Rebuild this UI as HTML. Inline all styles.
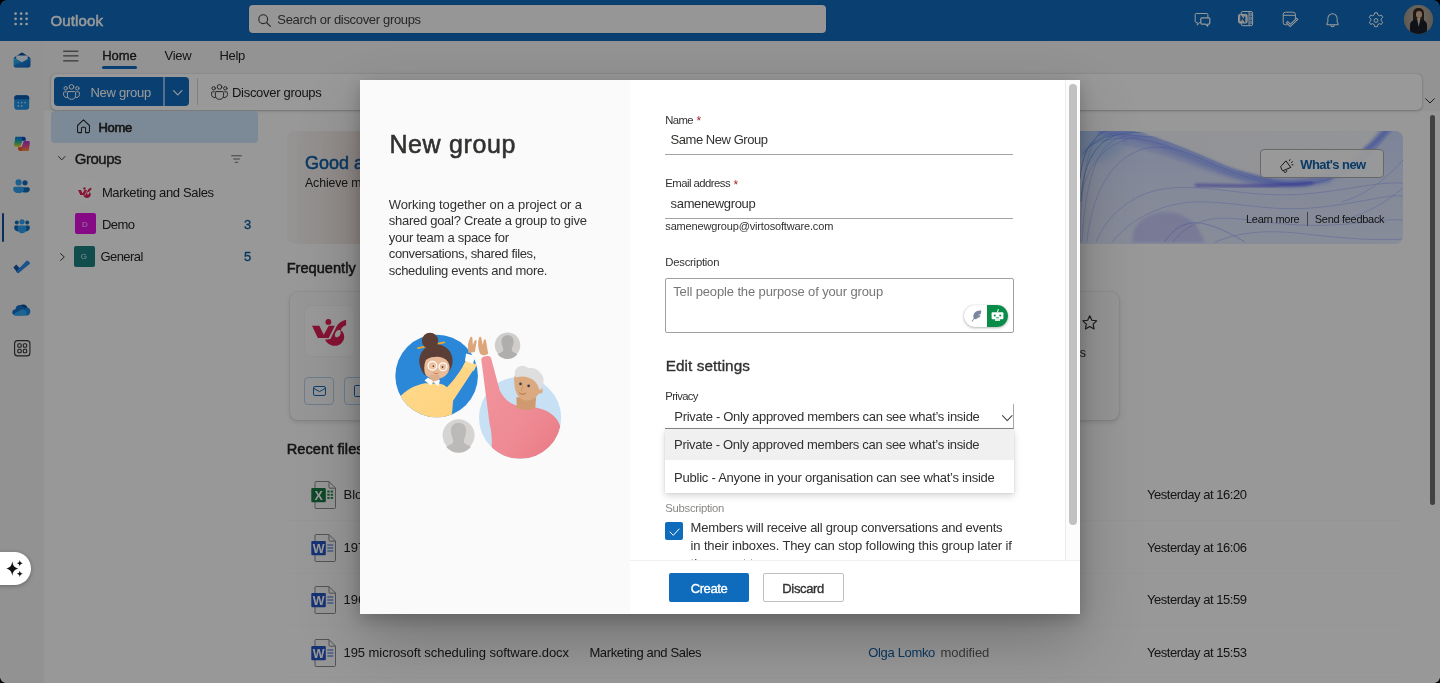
<!DOCTYPE html><html><head><meta charset="utf-8"><title>Outlook</title>
<style>
*{box-sizing:border-box;margin:0;padding:0}
html,body{width:1440px;height:683px;overflow:hidden;background:#f5f5f5;font-family:"Liberation Sans",sans-serif;color:#242424}
div,span,svg{position:absolute}
.t{white-space:nowrap;line-height:1;font-size:13px}
.b{font-weight:bold}
.sb{-webkit-text-stroke:.35px currentColor}
#top{left:0;top:0;width:1440px;height:41px;background:#0f6cbd}
#rail{left:0;top:41px;width:44px;height:642px;background:#f4f4f4}
#page{left:44px;top:41px;width:1396px;height:642px;background:#fdfdfd}
#overlay{left:0;top:0;width:1440px;height:683px;background:rgba(0,0,0,.4)}
svg{overflow:visible}
#wrap{left:0;top:0;width:1440px;height:683px;will-change:transform}
</style></head><body>
<div id="wrap">
<!-- ======= TOP BAR ======= -->
<div id="top">
  <svg style="left:14px;top:12.200px" width="15" height="15" viewBox="0 0 15 15" fill="#fff">
    <circle cx="1.600" cy="1.600" r="1.350"></circle><circle cx="7.100" cy="1.600" r="1.350"></circle><circle cx="12.600" cy="1.600" r="1.350"></circle>
    <circle cx="1.600" cy="6.800" r="1.350"></circle><circle cx="7.100" cy="6.800" r="1.350"></circle><circle cx="12.600" cy="6.800" r="1.350"></circle>
    <circle cx="1.600" cy="12" r="1.350"></circle><circle cx="7.100" cy="12" r="1.350"></circle><circle cx="12.600" cy="12" r="1.350"></circle>
  </svg>
  <span class="t" style="left: 50.6px; font-size: 15px; color: rgb(255, 255, 255); -webkit-text-stroke: 0.5px rgb(255, 255, 255); top: 13px; letter-spacing: 0.1px;">Outlook</span>
  <div style="left:249px;top:5px;width:577px;height:28px;background:#fbfbfb;border-radius:4px;box-shadow:0 0 0 .5px rgba(0,0,0,.15)"></div>
  <svg style="left:258px;top:13.5px" width="13" height="13" viewBox="0 0 13 13" fill="none" stroke="#424242" stroke-width="1.1" stroke-linecap="round"><circle cx="5.2" cy="5.2" r="4.4"></circle><path d="M8.5 8.5L12.4 12.4"></path></svg>
  <span class="t" style="left: 277.3px; font-size: 13px; color: rgb(66, 66, 66); top: 13px; letter-spacing: -0.33px;">Search or discover groups</span>
  <!-- chat -->
  <svg style="left:1195px;top:12.500px" width="16" height="14" viewBox="0 0 16 14" fill="none" stroke="#fff" stroke-width="1" stroke-linejoin="round"><path d="M1.200.5h10.700a1 1 0 0 1 1 1v6.900a1 1 0 0 1-1 1H4.600L2.300 12.200V9.400H1.200a1 1 0 0 1-1-1V1.500a1 1 0 0 1 1-1z"></path><path d="M6.800 4.800h7a1 1 0 0 1 1 1v4.300a1 1 0 0 1-1 1h-1.100v2.100l-2.300-2.100H6.800a1 1 0 0 1-1-1V5.800a1 1 0 0 1 1-1z" fill="#0f6cbd" stroke-width="1.200"></path></svg>
  <!-- onenote -->
  <svg style="left:1238px;top:11px" width="16" height="15" viewBox="0 0 16 15" fill="none" stroke="#fff" stroke-width="1" stroke-linejoin="round"><rect x="3.200" y=".5" width="11.400" height="14.200" rx="1.600"></rect><path d="M11 .8v13.700"></path><rect x="11.900" y="2.300" width="1.800" height="2.400" rx=".4" stroke-width=".8"></rect><rect x="11.900" y="6.300" width="1.800" height="2.400" rx=".4" stroke-width=".8"></rect><rect x="11.900" y="10.300" width="1.800" height="2.400" rx=".4" stroke-width=".8"></rect><rect x=".5" y="3.400" width="8.600" height="8.600" rx="1.200" fill="#ece8e4" stroke="#fff"></rect><path d="M3 9.900V5.500l3.600 4.400V5.500" stroke="#0f6cbd" stroke-width="1.500" stroke-linejoin="miter"></path></svg>
  <!-- calendar check -->
  <svg style="left:1282px;top:12px" width="16" height="15" viewBox="0 0 16 15" fill="none" stroke="#fff" stroke-width="1" stroke-linecap="round" stroke-linejoin="round"><path d="M5.200 12.800H3.400a2.200 2.200 0 0 1-2.200-2.200V2.400A2.200 2.200 0 0 1 3.400.2h7.800a2.200 2.200 0 0 1 2.200 2.200v4"></path><path d="M1.400 3.300h11.800"></path><path d="M5.600 10.700l2.600 2.700 6.400-6" stroke-width="2.700" stroke-linecap="square" stroke-linejoin="miter"></path><path d="M5.600 10.700l2.600 2.700 6.400-6" stroke="#0f6cbd" stroke-width=".9" stroke-linecap="square" stroke-linejoin="miter"></path></svg>
  <!-- bell -->
  <svg style="left:1325.600px;top:12.600px" width="13" height="15.400" viewBox="0 0 14 16" preserveAspectRatio="none" fill="none" stroke="#fff" stroke-width="1.050" stroke-linejoin="round" stroke-linecap="round"><path d="M7 .8a5 5 0 0 1 5 5v3.400l1.200 2.400a.4.400 0 0 1-.4.600H1.200a.4.400 0 0 1-.4-.6L2 9.200V5.800a5 5 0 0 1 5-5z"></path><path d="M5.200 12.400a1.800 1.800 0 0 0 3.600 0"></path></svg>
  <!-- gear -->
  <svg style="left:1367.500px;top:11.500px" width="16" height="17" viewBox="-8 -8.500 16 17" fill="none" stroke="#fff" stroke-width="1" stroke-linejoin="round"><path d="M-1.300 -7.700h2.600l.5 2.100 1.500.9 2.100-.7 1.300 2.300-1.600 1.500v1.700l1.600 1.500-1.300 2.300-2.100-.7-1.500.9-.5 2.100h-2.600l-.5-2.100-1.500-.9-2.100.7-1.300-2.300 1.600-1.500v-1.700l-1.600-1.500 1.300-2.300 2.100.7 1.500-.9z"></path><circle r="1.900"></circle></svg>
  <!-- avatar -->
  <div style="left:1404px;top:5px;width:29px;height:29px;border-radius:50%;overflow:hidden;background:#8d8a86">
    <div style="left:0;top:0;width:29px;height:29px;background:radial-gradient(ellipse at 50% 40%,#bdb5a8 0,#a39c90 60%,#8a8378 100%)"></div>
    <div style="left:9px;top:3px;width:11px;height:17px;border-radius:5px 5px 3px 3px;background:#3a2a22"></div>
    <div style="left:11.500px;top:5.500px;width:6px;height:7.500px;border-radius:3px;background:#d9b39b"></div>
    <div style="left:6px;top:15px;width:17px;height:16px;border-radius:5px 5px 0 0;background:#1c1f2a"></div>
    <div style="left:13px;top:13px;width:3.500px;height:9px;background:#d8c8b8;clip-path:polygon(0 0,100% 0,50% 100%)"></div>
  </div>
</div>
<!-- ======= LEFT RAIL ======= -->
<div id="rail"></div>
<!-- rail icons -->
<svg style="left:13px;top:52px" width="18" height="16" viewBox="0 0 18 16">
  <defs><linearGradient id="gm1" x1="0" y1="0" x2="1" y2="1"><stop offset="0" stop-color="#35b8f1"></stop><stop offset="1" stop-color="#0f6fd0"></stop></linearGradient></defs>
  <path d="M1.200 5.400L8.300.700a1.300 1.300 0 0 1 1.400 0L16.800 5.400V9H1.200z" fill="#0b4f9e"></path>
  <rect x="3.200" y="3.600" width="11.600" height="7" rx="1" fill="#e8f3fc"></rect>
  <path d="M.6 6.200a.5.500 0 0 1 .8-.4L9 10.200l7.600-4.400a.5.500 0 0 1 .8.400v7.400a1.800 1.800 0 0 1-1.800 1.800H2.400a1.800 1.800 0 0 1-1.800-1.800z" fill="url(#gm1)"></path>
  <path d="M.6 13.600L17.400 7v6.600a1.800 1.800 0 0 1-1.800 1.800H2.400a1.800 1.800 0 0 1-1.800-1.800z" fill="#1565c0" opacity=".55"></path>
</svg>
<svg style="left:14px;top:95px" width="15.500" height="15" viewBox="0 0 15.500 15">
  <rect x=".2" y=".2" width="15" height="14.600" rx="3" fill="#1e90e6"></rect>
  <path d="M.2 3.200a3 3 0 0 1 3-3h9a3 3 0 0 1 3 3v1H.2z" fill="#0c59a8"></path>
  <g fill="#a9dcfb"><circle cx="4.300" cy="7.600" r=".9"></circle><circle cx="7.700" cy="7.600" r=".9"></circle><circle cx="11.100" cy="7.600" r=".9"></circle><circle cx="4.300" cy="11" r=".9"></circle><circle cx="7.700" cy="11" r=".9"></circle></g>
</svg>
<svg style="left:6px;top:128px" width="32" height="32" viewBox="0 0 683 683">
  <defs>
   <linearGradient id="cp1" x1="0" y1="0" x2="0" y2="1"><stop offset="0" stop-color="#0b78e0"></stop><stop offset=".4" stop-color="#18a8c0"></stop><stop offset=".72" stop-color="#6cc85a"></stop><stop offset="1" stop-color="#ffd020"></stop></linearGradient>
   <linearGradient id="cp2" x1="0" y1="0" x2="0" y2="1"><stop offset="0" stop-color="#a838e0"></stop><stop offset=".5" stop-color="#ec4890"></stop><stop offset="1" stop-color="#ff9030"></stop></linearGradient>
  </defs>
  <path d="M478 492H298Q262 490 258 418L330 408L378 278H483Q518 280 508 330L488 465Q485 490 478 492Z" fill="url(#cp2)"></path>
  <path d="M342 488H292Q262 482 258 415L334 408Q354 450 342 488Z" fill="#ee5a2a"></path>
  <path d="M205 188H385Q420 190 425 262L352 272L305 402H200Q165 400 175 350L195 215Q198 190 205 188Z" fill="url(#cp1)"></path>
  <path d="M340 192H390Q420 198 425 265L350 272Q328 230 340 192Z" fill="#1c44c0"></path>
  <path d="M352 285L374 285L330 400L308 400Z" fill="#fff" opacity=".9"></path>
</svg>
<svg style="left:13px;top:178.500px" width="17" height="14.500" viewBox="0 0 17 14.500">
  <circle cx="12" cy="3.800" r="2.600" fill="#0f6cbd"></circle>
  <path d="M8.600 8.200h6.600a1.600 1.600 0 0 1 1.600 1.600v.6c0 2-1.800 3.200-4.600 3.200s-3.600-1.200-3.600-3.200z" fill="#0f6cbd"></path>
  <circle cx="5.600" cy="3.400" r="3.100" fill="#2ea0ee"></circle>
  <path d="M1.800 7.800h7.600a1.600 1.600 0 0 1 1.600 1.600v.8c0 2.400-2.200 3.900-5.400 3.900S.2 12.600.2 10.200v-.8a1.600 1.600 0 0 1 1.600-1.600z" fill="#2ea0ee"></path>
</svg>
<div style="left:2.200px;top:213px;width:1.700px;height:29px;background:#0f4f9c;border-radius:1px"></div>
<svg style="left:13.500px;top:219px" width="16" height="14.500" viewBox="0 0 16 14.500">
  <circle cx="2.800" cy="3.600" r="2" fill="#0f6cbd"></circle><circle cx="13.200" cy="3.600" r="2" fill="#0f6cbd"></circle>
  <path d="M.2 8a1.400 1.400 0 0 1 1.400-1.400h3v5.800C2.400 12.400.2 11.400.2 9z" fill="#0f6cbd"></path>
  <path d="M15.800 8a1.400 1.400 0 0 0-1.400-1.400h-3v5.800c2.200 0 4.400-1 4.400-3.400z" fill="#0f6cbd"></path>
  <circle cx="8" cy="2.800" r="2.600" fill="#2ea0ee"></circle>
  <path d="M3.800 8a1.600 1.600 0 0 1 1.600-1.600h5.200A1.600 1.600 0 0 1 12.200 8v2.200c0 2.400-1.800 4.100-4.200 4.100s-4.200-1.700-4.200-4.100z" fill="#2ea0ee"></path>
</svg>
<svg style="left:13px;top:260px" width="17.500" height="14.500" viewBox="0 0 17.500 14.500">
  <path d="M.4 7.400L3.200 4.600l5.400 5.400-2.800 2.800a1 1 0 0 1-1.400 0z" fill="#1553a8"></path>
  <path d="M5.800 12.800a1 1 0 0 1-1.400 0L3 11.400 13.600.8a1 1 0 0 1 1.400 0l1.700 1.700a1 1 0 0 1 0 1.400z" fill="#2a8ae6"></path>
</svg>
<svg style="left:12.400px;top:303px" width="18.500" height="13" viewBox="0 0 18.500 13">
  <path d="M7.200 3.200a5 5 0 0 1 8.400 1.400l-6 5.400z" fill="#0f4f9c"></path>
  <path d="M3.400 6.200A4.200 4.200 0 0 1 10.800 3.600l3.400 2-7.400 6.800H3.800A3.600 3.600 0 0 1 .2 9a3.400 3.400 0 0 1 3.200-2.800z" fill="#1570c8"></path>
  <path d="M14.600 4.400A3.800 3.800 0 0 1 18.300 8.400 4 4 0 0 1 14.600 12.400H6.400z" fill="#1a86e0"></path>
  <path d="M3.200 12.400A3.200 3.200 0 0 1 1 11.600L10.400 6l4.200 2.600c.5 2.400-.7 3.800-2.400 3.800z" fill="#30a8f2"></path>
</svg>
<svg style="left:13.700px;top:340px" width="16.500" height="16.500" viewBox="0 0 16.500 16.500" fill="none" stroke="#333" stroke-width="1.100">
  <rect x=".6" y=".6" width="15.300" height="15.300" rx="3"></rect>
  <rect x="3.800" y="3.800" width="3.400" height="3.400" rx="1"></rect><rect x="9.300" y="3.800" width="3.400" height="3.400" rx="1"></rect>
  <rect x="3.800" y="9.300" width="3.400" height="3.400" rx="1"></rect><rect x="9.300" y="9.300" width="3.400" height="3.400" rx="1"></rect>
</svg>
<!-- ======= PAGE ======= -->
<div id="page"></div>
<div style="left:44px;top:41px;width:1396px;height:70px;background:#f5f5f5"></div>
<!-- tabs -->
<svg style="left:63px;top:49.500px" width="16" height="12" viewBox="0 0 16 12" stroke="#333" stroke-width="1" stroke-linecap="round"><path d="M.6 1.200h14.400M.6 5.900h14.400M.6 10.900h14.400"></path></svg>
<span class="t sb" style="left: 102.2px; top: 49.4px; letter-spacing: -0.047px;">Home</span>
<div style="left:102px;top:66px;width:35px;height:2.600px;border-radius:2px;background:#0f6cbd"></div>
<span class="t" style="left: 164.6px; top: 49.4px; letter-spacing: -0.338px;">View</span>
<span class="t" style="left: 219.4px; top: 49.4px; letter-spacing: -0.313px;">Help</span>
<!-- ribbon -->
<div style="left:51px;top:74px;width:1371px;height:36px;background:#fff;border-radius:5px;box-shadow:0 1px 3px rgba(0,0,0,.22),0 0 1px rgba(0,0,0,.25)"></div>
<div style="left:54.400px;top:77px;width:108.600px;height:29px;background:#0f6cbd;border-radius:4px 0 0 4px"></div>
<div style="left:163px;top:77px;width:2px;height:29px;background:#8fb8e6"></div>
<div style="left:165px;top:77px;width:24.400px;height:29px;background:#0f6cbd;border-radius:0 4px 4px 0"></div>
<svg style="left:62.900px;top:84px" width="17" height="15.500" viewBox="0 0 17 15.500" fill="none" stroke="#fff" stroke-width="1" stroke-linecap="round" stroke-linejoin="round">
  <circle cx="8.500" cy="2.900" r="2.300"></circle><circle cx="2.700" cy="4.300" r="1.700"></circle><circle cx="14.300" cy="4.300" r="1.700"></circle>
  <path d="M5.200 7.600h6.600a.8.800 0 0 1 .8.800v2.800a4.100 4.100 0 0 1-8.200 0V8.400a.8.800 0 0 1 .8-.8z"></path>
  <path d="M3.200 7.800H1.400a.8.800 0 0 0-.8.800v2a3 3 0 0 0 3.600 3"></path><path d="M13.800 7.800h1.800a.8.800 0 0 1 .8.800v2a3 3 0 0 1-3.600 3"></path>
</svg>
<span class="t" style="left: 90.4px; color: rgb(255, 255, 255); top: 85.6px; letter-spacing: -0.253px;">New group</span>
<svg style="left:172.500px;top:90px" width="9.500" height="5.500" viewBox="0 0 9.500 5.500" fill="none" stroke="#fff" stroke-width="1.200" stroke-linecap="round" stroke-linejoin="round"><path d="M.6.600l4.150 4.200L8.900.6"></path></svg>
<div style="left:196.500px;top:78px;width:1px;height:27px;background:#d6d6d6"></div>
<svg style="left:210.500px;top:84px" width="17" height="15.500" viewBox="0 0 17 15.500" fill="none" stroke="#424242" stroke-width="1" stroke-linecap="round" stroke-linejoin="round">
  <circle cx="8.500" cy="2.900" r="2.300"></circle><circle cx="2.700" cy="4.300" r="1.700"></circle><circle cx="14.300" cy="4.300" r="1.700"></circle>
  <path d="M5.200 7.600h6.600a.8.800 0 0 1 .8.800v2.800a4.100 4.100 0 0 1-8.200 0V8.400a.8.800 0 0 1 .8-.8z"></path>
  <path d="M3.200 7.800H1.400a.8.800 0 0 0-.8.800v2a3 3 0 0 0 3.600 3"></path><path d="M13.800 7.800h1.800a.8.800 0 0 1 .8.800v2a3 3 0 0 1-3.600 3"></path>
</svg>
<span class="t" style="left: 232px; top: 85.6px; letter-spacing: -0.296px;">Discover groups</span>
<svg style="left:1425px;top:97.500px" width="10" height="6" viewBox="0 0 10 6" fill="none" stroke="#333" stroke-width="1" stroke-linecap="round" stroke-linejoin="round"><path d="M.7.700l4.300 4.300L9.300.7"></path></svg>
<!-- page scrollbar -->
<div style="left:1429.600px;top:114.500px;width:5.300px;height:390px;border-radius:3px;background:#6f6f6f"></div>
<!-- nav -->
<div style="left:51.200px;top:110.600px;width:207px;height:32px;background:#cfe4fa;border-radius:4px"></div>
<svg style="left:76.800px;top:119px" width="13" height="14.300" viewBox="0 0 14 14.500" preserveAspectRatio="none" fill="none" stroke="#242424" stroke-width="1.100" stroke-linejoin="round"><path d="M.6 6.600L7 .8l6.400 5.800v6.200a1 1 0 0 1-1 1H9.200V9.400a1 1 0 0 0-1-1H5.800a1 1 0 0 0-1 1v4.400H1.600a1 1 0 0 1-1-1z"></path></svg>
<span class="t" style="left: 98.5px; -webkit-text-stroke: 0.6px rgb(36, 36, 36); top: 121.2px; letter-spacing: -0.297px;">Home</span>
<svg style="left:58px;top:156px" width="7.500" height="4.500" viewBox="0 0 7.500 4.500" fill="none" stroke="#424242" stroke-width="1" stroke-linecap="round" stroke-linejoin="round"><path d="M.5.500l3.250 3.400L7 .5"></path></svg>
<span class="t sb" style="left: 74.7px; font-size: 15px; top: 150.8px; letter-spacing: -0.451px;">Groups</span>
<svg style="left:231px;top:154.500px" width="11" height="8" viewBox="0 0 11 8" stroke="#707070" stroke-width="1.100" stroke-linecap="round"><path d="M.6.700h9.800M2.600 4h5.800M4.300 7.300h2.400"></path></svg>
<div style="left:74.700px;top:181px;width:21.300px;height:21.300px;background:#fff;border-radius:3px"></div>
<svg width="0" height="0" style="left:0;top:0"><defs><symbol id="vis" viewBox="165 222 335 268"><polygon points="165,287 237,287 280,375 328,287 388,287 328,408 222,408"></polygon><circle cx="325" cy="250" r="29"></circle><path fill-rule="evenodd" d="M500 228C450 238 415 268 400 305L345 418L292 424C320 480 400 505 450 460C495 420 485 355 447 335C450 310 468 290 500 283ZM440 331C418 321 396 340 389 372C385 396 400 405 418 398C444 386 452 353 440 331Z"></path></symbol></defs></svg>
<svg style="left:78px;top:186.600px" width="13.600" height="11.600" fill="#e02055"><use href="#vis"></use></svg>
<span class="t" style="left: 101.9px; top: 185.5px; letter-spacing: -0.353px;">Marketing and Sales</span>
<div style="left:74.700px;top:213.100px;width:21.300px;height:21.300px;background:#e012e0;border-radius:2px"></div>
<span class="t" style="left: 81.9px; font-size: 8px; color: rgb(247, 200, 243); top: 220.53px;">D</span>
<span class="t" style="left: 101.9px; top: 217.7px; letter-spacing: -0.547px;">Demo</span>
<span class="t sb" style="left: 244px; color: rgb(17, 94, 163); top: 217.7px;">3</span>
<svg style="left:59.700px;top:253px" width="5" height="8" viewBox="0 0 5 8" fill="none" stroke="#424242" stroke-width="1" stroke-linecap="round" stroke-linejoin="round"><path d="M.6.600L4.300 4 .6 7.400"></path></svg>
<div style="left:73.700px;top:245.600px;width:21.300px;height:21.400px;background:#1f8080;border-radius:2px"></div>
<span class="t" style="left: 80.8px; font-size: 8px; color: rgb(200, 236, 236); top: 252.83px;">G</span>
<span class="t" style="left: 100.4px; top: 250.3px; letter-spacing: -0.55px;">General</span>
<span class="t sb" style="left: 244px; color: rgb(17, 94, 163); top: 250.3px;">5</span>
<!-- ======= MAIN CONTENT ======= -->
<div id="banner" style="left:287px;top:131px;width:1115.500px;height:113px;border-radius:8px;overflow:hidden;background:linear-gradient(90deg,#f8f6f5 0,#f5f0ee 3%,#f3e6e1 7%,#f1e6e6 14%,#ecebf3 45%,#f3f5fb 72%,#f7f8fc 100%)">
  <svg style="left:788px;top:-6px" width="335" height="125" viewBox="0 0 1440 537" fill="none">
    <defs>
      <filter id="bl1" x="-20%" y="-50%" width="140%" height="200%"><feGaussianBlur stdDeviation="7"></feGaussianBlur></filter>
      <filter id="bl2" x="-20%" y="-50%" width="140%" height="200%"><feGaussianBlur stdDeviation="18"></feGaussianBlur></filter>
      <filter id="bl3" x="-20%" y="-50%" width="140%" height="200%"><feGaussianBlur stdDeviation="3"></feGaussianBlur></filter>
      <clipPath id="wc"><path d="M0 0H110C300 14 460 88 650 172C800 232 1000 254 1150 178C1250 118 1300 50 1340 0H1440V537H0Z"></path></clipPath>
      <linearGradient id="wf" x1="0" y1="0" x2="0" y2="1"><stop offset="0" stop-color="#cfdcff"></stop><stop offset=".5" stop-color="#dde6ff"></stop><stop offset="1" stop-color="#e2eaff"></stop></linearGradient>
    </defs>
    <path d="M0 0H110C300 20 460 95 650 180C800 240 1000 262 1150 185C1250 125 1300 55 1345 0H1440V537H0Z" fill="url(#wf)"></path>
    <ellipse cx="60" cy="70" rx="150" ry="90" fill="#5a9cf0" opacity=".22" filter="url(#bl2)"></ellipse>
    <g stroke="#2f7fe0" stroke-width="4" opacity=".55" filter="url(#bl3)" clip-path="url(#wc)"><path d="M22 230C28 140 60 60 130 26S300 20 420 60"></path><path d="M26 330C30 200 70 90 160 50S380 40 520 100"></path><path d="M40 120C80 60 150 36 240 40"></path></g>
    <path d="M100 24C300 42 450 112 650 194C800 252 1000 272 1150 197C1250 137 1300 62 1345 5" stroke="#7f98ff" stroke-width="34" opacity=".55" filter="url(#bl1)"></path>
    <path d="M200 70C380 100 520 170 700 225C820 258 960 270 1100 235" stroke="#8fa2ff" stroke-width="30" opacity=".35" filter="url(#bl1)"></path>
    <path d="M520 258C700 264 860 264 1020 248" stroke="#4b46ee" stroke-width="10" opacity=".8" filter="url(#bl1)" stroke-linecap="round"></path>
    <path d="M250 505C240 440 290 380 380 375C450 372 490 400 520 430L560 505Z" fill="#b0b0f8" opacity=".5" filter="url(#bl1)"></path>
    <path d="M1240 110C1290 80 1330 40 1360 0" stroke="#7086ff" stroke-width="18" opacity=".55" filter="url(#bl1)"></path>
    <g stroke="#5570ff" stroke-width="2.600" opacity=".42" filter="url(#bl3)" clip-path="url(#wc)">
      <path d="M24 504C24 300 40 100 112 28S330 30 480 90S720 205 860 240S1080 250 1180 190S1320 60 1370 20"></path>
      <path d="M30 504C40 320 70 130 160 70S400 70 540 130S780 240 920 258"></path>
      <path d="M50 504C70 330 130 180 250 120S480 120 600 170S820 262 1000 262"></path>
      <path d="M28 300C60 150 150 60 290 50S560 130 720 200S1040 270 1180 195"></path>
      <path d="M90 504C140 380 260 280 420 270S700 300 900 300S1280 240 1410 250"></path>
      <path d="M160 504C240 400 380 330 540 330S860 380 1080 350S1340 300 1410 305"></path>
      <path d="M383 504C420 450 460 420 520 420S680 470 731 504" stroke-width="3.600"></path>
      <path d="M420 504C470 440 540 400 640 400S900 440 1100 430S1340 400 1410 410"></path>
      <path d="M600 504C700 460 820 450 960 465S1260 500 1410 490"></path>
      <path d="M60 90C160 40 300 50 420 100"></path>
      <path d="M30 130C70 50 170 22 260 30"></path>
      <path d="M1150 330C1250 300 1340 230 1410 150"></path>
      <path d="M1100 420C1220 400 1330 340 1410 270"></path>
    </g>
  </svg>
</div>
<span class="t" style="left: 305px; font-size: 18px; color: rgb(17, 94, 163); -webkit-text-stroke: 0.5px rgb(17, 94, 163); top: 153.56px;">Good afternoon, Olga</span>
<span class="t" style="left: 305px; font-size: 12.3px; letter-spacing: -0.1px; top: 176.99px;">Achieve more with Groups</span>
<div style="left:1260.400px;top:149.400px;width:124px;height:28.300px;background:rgba(255,255,255,.92);border:1px solid #adadad;border-radius:4px"></div>
<svg style="left:1279.500px;top:159px" width="13.500" height="13.500" viewBox="0 0 13.500 13.500" fill="none" stroke="#242424" stroke-width="1" stroke-linecap="round" stroke-linejoin="round"><path d="M6.200 2.200l4.600 6.200-7.400 3.200a1 1 0 0 1-1.300-.5L.8 8.200a1 1 0 0 1 .3-1.200z"></path><path d="M3.400 11.600l.6 1a1.500 1.500 0 0 0 2.800-.9"></path><path d="M9.400 1.600l.6-1M11.400 3.400l1-.6M12 5.800h1"></path></svg>
<span class="t b" style="left: 1300.3px; color: rgb(15, 98, 173); top: 157.8px; letter-spacing: -0.57px;">What's new</span>
<span class="t" style="left: 1246px; font-size: 11px; top: 213.99px; letter-spacing: -0.287px;">Learn more</span>
<div style="left:1307px;top:211.600px;width:1px;height:14.500px;background:#707070"></div>
<span class="t" style="left: 1314.8px; font-size: 11px; top: 213.99px; letter-spacing: -0.299px;">Send feedback</span>
<span class="t" style="left: 286.7px; font-size: 14.6px; -webkit-text-stroke: 0.5px rgb(36, 36, 36); top: 261.04px; letter-spacing: 0.005px;">Frequently</span>
<!-- card -->
<div style="left:290px;top:291.500px;width:828.500px;height:128.500px;background:#fafafa;border-radius:8px;box-shadow:0 2px 5px rgba(0,0,0,.14),0 0 2px rgba(0,0,0,.12)"></div>
<div style="left:304.700px;top:305.500px;width:49.600px;height:50.500px;background:#fff;border-radius:6px;box-shadow:0 0 0 .5px rgba(0,0,0,.03)"></div>
<svg style="left:311.900px;top:318.750px" width="34.300" height="27.500" fill="#e02055"><use href="#vis"></use></svg>
<div style="left:304.400px;top:377px;width:29.300px;height:28.400px;border:1px solid #b4d0ee;border-radius:4px"></div>
<svg style="left:313px;top:386px" width="13" height="10" viewBox="0 0 13 10" fill="none" stroke="#0f6cbd" stroke-width="1" stroke-linejoin="round"><rect x=".5" y=".5" width="12" height="9" rx="1.500"></rect><path d="M.8 2.400L6.500 5.600l5.700-3.200"></path></svg>
<div style="left:344px;top:377px;width:29.300px;height:28.400px;border:1px solid #b4d0ee;border-radius:4px"></div>
<svg style="left:354px;top:385px" width="10" height="12" viewBox="0 0 10 12" fill="none" stroke="#0f6cbd" stroke-width="1" stroke-linejoin="round"><path d="M.5 1.500a1 1 0 0 1 1-1h4l4 4v6a1 1 0 0 1-1 1h-7a1 1 0 0 1-1-1z"></path></svg>
<svg style="left:1082px;top:314.800px" width="15.500" height="15" viewBox="0 0 15.500 15" fill="none" stroke="#2a2a2a" stroke-width="1.150" stroke-linejoin="round"><path d="M7.750.8l2.100 4.400 4.800.6-3.500 3.300.9 4.800-4.300-2.400-4.300 2.400.9-4.800L.85 5.800l4.800-.6z"></path></svg>
<span class="t" style="left: 1034px; font-size: 12.5px; top: 346.92px;">members</span>
<span class="t" style="left: 286.7px; font-size: 14.6px; -webkit-text-stroke: 0.5px rgb(36, 36, 36); top: 441.64px; letter-spacing: 0.063px;">Recent files</span>
<!-- rows -->
<svg style="left:310.500px;top:480.8px" width="26" height="28.500" viewBox="0 0 26 28.500">
  <path d="M4 1.500a1 1 0 0 1 1-1h13l6.500 6.500v19.500a1 1 0 0 1-1 1H5a1 1 0 0 1-1-1z" fill="#fbfbfb" stroke="#8a8a8a" stroke-width="1" stroke-linejoin="round"></path>
  <path d="M18 .8v5.400a1 1 0 0 0 1 1h5.400" fill="none" stroke="#8a8a8a" stroke-width="1"></path>
  <rect x=".3" y="7" width="14.500" height="14.200" rx="1" fill="#187a43"></rect>
  <text x="7.550" y="18.600" text-anchor="middle" font-family="Liberation Sans" font-weight="bold" font-size="12.500" fill="#fff">X</text>
  <g fill="#1f8a4c"><rect x="16.300" y="9.600" width="2.400" height="1.900"></rect><rect x="19.700" y="9.600" width="2.400" height="1.900"></rect><rect x="16.300" y="12.800" width="2.400" height="1.900"></rect><rect x="19.700" y="12.800" width="2.400" height="1.900"></rect><rect x="16.300" y="16" width="2.400" height="1.900"></rect><rect x="19.700" y="16" width="2.400" height="1.900"></rect></g>
</svg>
<span class="t" style="left: 343.5px; top: 488.1px;">Blog posts plan 2025.xlsx</span>
<span class="t" style="left: 589.4px; top: 487.6px; letter-spacing: -0.353px;">Marketing and Sales</span>
<span class="t" style="left: 868.3px; color: rgb(17, 94, 163); top: 487.8px; letter-spacing: -0.339px;">Olga Lomko</span>
<span class="t" style="left: 940.6px; color: rgb(97, 97, 97); top: 487.8px; letter-spacing: -0.055px;">modified</span>
<span class="t" style="left: 1147px; top: 487.8px; letter-spacing: -0.469px;">Yesterday at 16:20</span>
<div style="left:288px;top:519.9px;width:1114px;height:1px;background:#f8f8f8"></div>
<svg style="left:310.500px;top:533.5px" width="26" height="28.500" viewBox="0 0 26 28.500">
  <path d="M4 1.500a1 1 0 0 1 1-1h13l6.500 6.500v19.500a1 1 0 0 1-1 1H5a1 1 0 0 1-1-1z" fill="#fbfbfb" stroke="#8a8a8a" stroke-width="1" stroke-linejoin="round"></path>
  <path d="M18 .8v5.400a1 1 0 0 0 1 1h5.400" fill="none" stroke="#8a8a8a" stroke-width="1"></path>
  <rect x=".3" y="7" width="14.500" height="14.200" rx="1" fill="#2355c4"></rect>
  <text x="7.550" y="18.600" text-anchor="middle" font-family="Liberation Sans" font-weight="bold" font-size="12.500" fill="#fff">W</text>
  <path d="M16.300 11h6M16.300 14h6M16.300 17h6" stroke="#2f66d8" stroke-width="1"></path>
</svg>
<span class="t" style="left: 343.5px; top: 540.8px;">197 sharepoint calendar overlay.docx</span>
<span class="t" style="left: 589.4px; top: 540.3px; letter-spacing: -0.353px;">Marketing and Sales</span>
<span class="t" style="left: 868.3px; color: rgb(17, 94, 163); top: 540.5px; letter-spacing: -0.339px;">Olga Lomko</span>
<span class="t" style="left: 940.6px; color: rgb(97, 97, 97); top: 540.5px; letter-spacing: -0.055px;">modified</span>
<span class="t" style="left: 1147px; top: 540.5px; letter-spacing: -0.469px;">Yesterday at 16:06</span>
<div style="left:288px;top:572.6px;width:1114px;height:1px;background:#f8f8f8"></div>
<svg style="left:310.500px;top:586.0px" width="26" height="28.500" viewBox="0 0 26 28.500">
  <path d="M4 1.500a1 1 0 0 1 1-1h13l6.500 6.500v19.500a1 1 0 0 1-1 1H5a1 1 0 0 1-1-1z" fill="#fbfbfb" stroke="#8a8a8a" stroke-width="1" stroke-linejoin="round"></path>
  <path d="M18 .8v5.400a1 1 0 0 0 1 1h5.400" fill="none" stroke="#8a8a8a" stroke-width="1"></path>
  <rect x=".3" y="7" width="14.500" height="14.200" rx="1" fill="#2355c4"></rect>
  <text x="7.550" y="18.600" text-anchor="middle" font-family="Liberation Sans" font-weight="bold" font-size="12.500" fill="#fff">W</text>
  <path d="M16.300 11h6M16.300 14h6M16.300 17h6" stroke="#2f66d8" stroke-width="1"></path>
</svg>
<span class="t" style="left: 343.5px; top: 593.3px;">196 outlook shared calendar guide.docx</span>
<span class="t" style="left: 589.4px; top: 592.8px; letter-spacing: -0.353px;">Marketing and Sales</span>
<span class="t" style="left: 868.3px; color: rgb(17, 94, 163); top: 593px; letter-spacing: -0.339px;">Olga Lomko</span>
<span class="t" style="left: 940.6px; color: rgb(97, 97, 97); top: 593px; letter-spacing: -0.055px;">modified</span>
<span class="t" style="left: 1147px; top: 593px; letter-spacing: -0.469px;">Yesterday at 15:59</span>
<div style="left:288px;top:625.1px;width:1114px;height:1px;background:#f8f8f8"></div>
<svg style="left:310.500px;top:638.9px" width="26" height="28.500" viewBox="0 0 26 28.500">
  <path d="M4 1.500a1 1 0 0 1 1-1h13l6.500 6.500v19.500a1 1 0 0 1-1 1H5a1 1 0 0 1-1-1z" fill="#fbfbfb" stroke="#8a8a8a" stroke-width="1" stroke-linejoin="round"></path>
  <path d="M18 .8v5.400a1 1 0 0 0 1 1h5.400" fill="none" stroke="#8a8a8a" stroke-width="1"></path>
  <rect x=".3" y="7" width="14.500" height="14.200" rx="1" fill="#2355c4"></rect>
  <text x="7.550" y="18.600" text-anchor="middle" font-family="Liberation Sans" font-weight="bold" font-size="12.500" fill="#fff">W</text>
  <path d="M16.300 11h6M16.300 14h6M16.300 17h6" stroke="#2f66d8" stroke-width="1"></path>
</svg>
<span class="t" style="left: 343.5px; top: 646.2px; letter-spacing: -0.056px;">195 microsoft scheduling software.docx</span>
<span class="t" style="left: 589.4px; top: 645.7px; letter-spacing: -0.353px;">Marketing and Sales</span>
<span class="t" style="left: 868.3px; color: rgb(17, 94, 163); top: 645.9px; letter-spacing: -0.339px;">Olga Lomko</span>
<span class="t" style="left: 940.6px; color: rgb(97, 97, 97); top: 645.9px; letter-spacing: -0.055px;">modified</span>
<span class="t" style="left: 1147px; top: 645.9px; letter-spacing: -0.469px;">Yesterday at 15:53</span>
<div style="left:288px;top:677.300px;width:1114px;height:1px;background:#f8f8f8"></div>
<!-- ======= OVERLAY ======= -->
<div id="overlay"></div>
<!-- sparkle pill -->
<div style="left:-4px;top:552px;width:35px;height:33px;background:#fff;border-radius:0 16.500px 16.500px 0;box-shadow:0 1px 4px rgba(0,0,0,.3)"></div>
<svg style="left:0px;top:552px" width="31" height="33" viewBox="0 0 31 33" fill="#111"><path d="M12.300 9.200c.7 4.600 1.900 6.100 6.200 7.400-4.300 1.300-5.500 2.800-6.200 7.400-.7-4.600-1.900-6.100-6.200-7.400 4.300-1.300 5.500-2.800 6.200-7.400z"></path><path d="M19.800 8c.4 2.100.9 2.700 3 3.200-2.100.5-2.600 1.100-3 3.200-.4-2.100-.9-2.700-3-3.200 2.100-.5 2.600-1.100 3-3.200z"></path><path d="M19.800 18.600c.4 2.100.9 2.700 3 3.200-2.100.5-2.600 1.100-3 3.200-.4-2.100-.9-2.700-3-3.200 2.100-.5 2.600-1.100 3-3.200z"></path></svg>
<!-- window corners -->
<div style="left:0;top:0;width:7px;height:7px;background:radial-gradient(circle at 7px 7px,transparent 6.500px,#000 7.200px)"></div>
<div style="left:1433px;top:0;width:7px;height:7px;background:radial-gradient(circle at 0 7px,transparent 6.500px,#000 7.200px)"></div>
<div style="left:0;top:677px;width:6px;height:6px;background:radial-gradient(circle at 6px 0,transparent 5.500px,#000 6.200px)"></div>
<div style="left:1434px;top:677px;width:6px;height:6px;background:radial-gradient(circle at 0 0,transparent 5.500px,#000 6.200px)"></div>
<!-- ======= MODAL ======= -->
<div id="modal" style="left:360px;top:80px;width:720px;height:534px;background:#fff;box-shadow:0 25.600px 57.600px rgba(0,0,0,.24),0 4.800px 14.400px rgba(0,0,0,.2)"></div>
<div style="left:360px;top:80px;width:270px;height:534px;background:#fafafa"></div>
<span class="t" style="left: 389.4px; font-size: 25px; color: rgb(50, 49, 48); -webkit-text-stroke: 0.55px rgb(50, 49, 48); top: 131.64px; letter-spacing: 0.633px;">New group</span>
<span class="t" style="left: 388.75px; color: rgb(50, 49, 48); top: 197.5px; letter-spacing: -0.091px;">Working together on a project or a</span>
<span class="t" style="left: 388.75px; color: rgb(50, 49, 48); top: 214px; letter-spacing: -0.273px;">shared goal? Create a group to give</span>
<span class="t" style="left: 388.75px; color: rgb(50, 49, 48); top: 230.5px; letter-spacing: -0.273px;">your team a space for</span>
<span class="t" style="left: 388.75px; color: rgb(50, 49, 48); top: 247.3px; letter-spacing: -0.367px;">conversations, shared files,</span>
<span class="t" style="left: 388.75px; color: rgb(50, 49, 48); top: 263.9px; letter-spacing: -0.288px;">scheduling events and more.</span>
<!--ILLUS--><svg style="left:385px;top:320px" width="190" height="150" viewBox="0 0 865 683">
  <defs>
    <clipPath id="cb"><circle cx="235" cy="255" r="188"></circle></clipPath>
    <clipPath id="cl"><path d="M428 0H802V445A187 187 0 0 1 428 445Z"></path></clipPath>
    <linearGradient id="pk" x1="0" y1="0" x2="1" y2="1"><stop offset="0" stop-color="#f2959d"></stop><stop offset=".6" stop-color="#ee8a93"></stop><stop offset="1" stop-color="#e87882"></stop></linearGradient>
    <linearGradient id="yl" x1="0" y1="0" x2="1" y2="1"><stop offset="0" stop-color="#ffdc8f"></stop><stop offset="1" stop-color="#fdd07c"></stop></linearGradient>
  </defs>
  <!-- grey avatars -->
  <circle cx="558" cy="115" r="58" fill="#d0cecc"></circle>
  <path d="M558 70c-20 0-30 16-27 36 2 14 8 22 8 30 0 10-16 14-26 20a58 58 0 0 0 90 0c-10-6-26-10-26-20 0-8 6-16 8-30 3-20-7-36-27-36z" fill="#b0aeac"></path>
  <circle cx="335" cy="525" r="73" fill="#d6d4d2"></circle>
  <path d="M335 468c-26 0-38 20-34 46 3 18 10 28 10 38 0 12-20 18-33 25a73 73 0 0 0 114 0c-13-7-33-13-33-25 0-10 7-20 10-38 4-26-8-46-34-46z" fill="#bcbab8"></path>
  <!-- blue circle + woman -->
  <circle cx="235" cy="255" r="188" fill="#2b88d8"></circle>
  <g clip-path="url(#cb)">
    <path d="M60 360C90 318 140 296 182 288L250 290C264 292 272 298 282 306C310 280 345 232 370 186L418 204L310 368L303 450H30Z" fill="url(#yl)"></path>
  </g>
  <path d="M368 186l50 18-14 28-50-20z" fill="#ffdc8f"></path>
  <path d="M369 152L412 164L400 200L364 186Z" fill="#fbfbfb"></path>
  <path d="M380 150c-6-24-2-50 8-70 4-6 10-4 10 4l2 30 8-20c4-6 10-2 9 4l-8 48z" fill="#dca67a"></path>
  <path d="M150 128L270 102" stroke="#f5a623" stroke-width="8" stroke-linecap="round"></path>
  <circle cx="205" cy="95" r="37" fill="#5b3f37"></circle>
  
  <circle cx="232" cy="186" r="76" fill="#5b3f37"></circle>
  <path d="M168 208C178 178 212 163 248 168C276 172 293 190 294 214C294 246 266 268 232 268C198 268 170 246 168 208Z" fill="#e9bb98"></path>
  <path d="M205 250h42v36h-42z" fill="#dfae8a"></path>
  
  <path d="M157 190C160 215 168 240 186 255C176 232 176 205 186 182Z" fill="#5b3f37"></path><circle cx="216" cy="208" r="20" fill="#edc3a2" stroke="#fff" stroke-width="5.500"></circle><circle cx="220" cy="210" r="4" fill="#5b3f37"></circle>
  <circle cx="264" cy="213" r="18" fill="#edc3a2" stroke="#fff" stroke-width="5.500"></circle><circle cx="262" cy="214" r="4" fill="#5b3f37"></circle>
  <path d="M222 240c6 6 14 6 20 2" stroke="#b56a4a" stroke-width="3.500" fill="none" stroke-linecap="round"></path>
  <path d="M180 276L196 262L220 280L209 298Z" fill="#fbfbfb"></path><path d="M220 280L250 272L244 300L232 294Z" fill="#fbfbfb"></path>
  <!-- light blue circle + man -->
  <circle cx="615" cy="445" r="187" fill="#c7e0f4"></circle>
  <g clip-path="url(#cl)">
    <path d="M438 178c4-14 34-20 44-8l40 150c20 40 50 66 90 72 70 2 130 10 170 60 30 40 30 120 20 200H480c8-70 10-130-4-180z" fill="url(#pk)"></path>
  </g>
  <path d="M428 150c-6-26-4-52 6-72 4-6 10-4 10 4l2 32 8-22c4-6 10-2 9 4l2 60c-10 8-28 6-37-6z" fill="#dca67a" transform="rotate(-8 445 120)"></path>
  <path d="M598 352h90l-4 48c-30 14-60 12-84 0z" fill="#cf9a6e"></path>
  <path d="M588 270c0-30 30-44 60-40 40 4 66 30 62 70-4 44-34 68-70 66-34-2-52-40-52-96z" fill="#dcaa80"></path>
  <circle cx="705" cy="322" r="13" fill="#dcaa80"></circle>
  <path d="M596 262c-12-20-2-48 22-52 14-4 26 2 34 10 20-6 44 2 54 20 14 10 20 30 14 50-2 14-8 24-16 30-6-20-14-36-30-48-20-14-50-20-78-10z" fill="#dedede"></path>
  <circle cx="617" cy="291" r="6" fill="#3b3a48"></circle><circle cx="654" cy="300" r="6" fill="#3b3a48"></circle>
  <path d="M612 332c8 8 20 8 28 2" stroke="#a8623e" stroke-width="3.500" fill="none" stroke-linecap="round"></path>
  <path d="M628 300c-4 10-8 18-6 24" stroke="#c48a5e" stroke-width="3" fill="none" stroke-linecap="round"></path>
</svg>
<!--/ILLUS-->
<!-- form -->
<span class="t" style="left: 665.3px; font-size: 11.3px; color: rgb(50, 49, 48); top: 114.73px; letter-spacing: -0.61px;">Name</span>
<span class="t" style="left: 696.6px; font-size: 12px; color: rgb(164, 38, 44); top: 115.44px;">*</span>
<span class="t" style="left: 670.6px; color: rgb(50, 49, 48); top: 133px; letter-spacing: -0.459px;">Same New Group</span>
<div style="left:665.300px;top:154px;width:348px;height:1px;background:#a3a3a3"></div>
<span class="t" style="left: 665.3px; font-size: 11.3px; color: rgb(50, 49, 48); top: 178.13px; letter-spacing: -0.529px;">Email address</span>
<span class="t" style="left: 733.6px; font-size: 12px; color: rgb(164, 38, 44); top: 178.84px;">*</span>
<span class="t" style="left: 670.6px; color: rgb(50, 49, 48); top: 196.8px; letter-spacing: -0.349px;">samenewgroup</span>
<div style="left:665.300px;top:218px;width:348px;height:1px;background:#a3a3a3"></div>
<span class="t" style="left: 665.3px; font-size: 11px; color: rgb(50, 49, 48); top: 221.09px; letter-spacing: -0.156px;">samenewgroup@virtosoftware.com</span>
<span class="t" style="left: 665.3px; font-size: 11.3px; color: rgb(50, 49, 48); top: 256.93px; letter-spacing: -0.238px;">Description</span>
<div style="left:665px;top:278.300px;width:349px;height:54.300px;border:1px solid #a0a0a0;border-radius:2px;background:#fff"></div>
<span class="t" style="left: 673.2px; color: rgb(118, 118, 118); top: 285px; letter-spacing: -0.131px;">Tell people the purpose of your group</span>
<!-- pill -->
<div style="left:964.300px;top:304.500px;width:44px;height:22px;border-radius:11px;background:#fff;box-shadow:0 1px 3px rgba(0,0,0,.28),0 0 1px rgba(0,0,0,.2)"></div>
<div style="left:986.500px;top:304.500px;width:21.800px;height:22px;border-radius:0 11px 11px 0;background:#098c48"></div>
<svg style="left:970.500px;top:309.500px" width="11" height="12" viewBox="0 0 11 12" fill="#7a869e"><path d="M10.200.6C7 .2 3.600 1.600 2.600 4.600c-.5 1.500-.2 2.800.2 3.600L.6 11.200l.7.500 1.900-2.600c1 .3 2.600.2 3.800-.8L4.600 8.200l3.600-.6c.6-.7 1-1.500 1.300-2.400L6.800 5.300l3-1.300c.3-1.100.4-2.300.4-3.400z"></path></svg>
<svg style="left:990.500px;top:308.500px" width="13" height="13" viewBox="0 0 13 13" fill="#fff"><path d="M6.900 0l1 .3-.9 2.700H6z"></path><rect x=".6" y="3.200" width="11.800" height="7" rx="1"></rect><rect x="4" y="10.200" width="5" height="1.600"></rect><circle cx="3.800" cy="6.400" r="1" fill="#098c48"></circle><circle cx="9.200" cy="6.400" r="1" fill="#098c48"></circle><rect x="5" y="8.400" width="3" height=".8" fill="#098c48"></rect></svg>
<span class="t sb" style="left: 665.7px; font-size: 15.3px; color: rgb(50, 49, 48); top: 357.65px; letter-spacing: 0.075px;">Edit settings</span>
<span class="t" style="left: 665.3px; font-size: 11.3px; color: rgb(50, 49, 48); top: 391.43px; letter-spacing: -0.65px;">Privacy</span>
<div style="left:665px;top:402.500px;width:349px;height:26.400px;border-bottom:1px solid #8a8a8a;border-right:1px solid #a6a6a6;border-top:1px solid #fff;border-radius:0 2px 0 0"></div>
<span class="t" style="left: 674.3px; color: rgb(50, 49, 48); top: 409.7px; letter-spacing: -0.304px;">Private - Only approved members can see what’s inside</span>
<svg style="left:1001.500px;top:414.500px" width="10.500" height="6.500" viewBox="0 0 10.500 6.500" fill="none" stroke="#444" stroke-width="1.050" stroke-linecap="round" stroke-linejoin="round"><path d="M.5.600l4.750 5L10 .6"></path></svg>
<span class="t" style="left: 665.3px; font-size: 11.3px; color: rgb(138, 136, 134); top: 503.13px; letter-spacing: -0.289px;">Subscription</span>
<div style="left:665.300px;top:522.300px;width:18px;height:18px;background:#0f6cbd;border-radius:2px"></div>
<svg style="left:668.500px;top:527px" width="12" height="9" viewBox="0 0 12 9" fill="none" stroke="#fff" stroke-width="1" stroke-linecap="round" stroke-linejoin="round"><path d="M1 5l3.300 3.300L10.100 2"></path></svg>
<span class="t" style="left: 690.6px; color: rgb(50, 49, 48); top: 520.9px; letter-spacing: -0.258px;">Members will receive all group conversations and events</span>
<span class="t" style="left: 690.6px; color: rgb(50, 49, 48); top: 539px; letter-spacing: -0.146px;">in their inboxes. They can stop following this group later if</span>
<span class="t" style="left: 690.6px; color: rgb(50, 49, 48); top: 556.5px;">they want to.</span>
<!-- dropdown list -->
<div style="left:665px;top:429px;width:348.500px;height:63.500px;background:#fff;box-shadow:0 3px 7px rgba(0,0,0,.16),0 0 2px rgba(0,0,0,.1)"></div>
<div style="left:665px;top:429px;width:348.500px;height:31.200px;background:#f0f0f0"></div>
<span class="t" style="left: 674.1px; color: rgb(50, 49, 48); top: 438.4px; letter-spacing: -0.304px;">Private - Only approved members can see what’s inside</span>
<span class="t" style="left: 674.1px; color: rgb(50, 49, 48); top: 470.8px; letter-spacing: -0.239px;">Public - Anyone in your organisation can see what’s inside</span>
<!-- scroll track -->
<div style="left:1064.800px;top:80px;width:15.200px;height:481px;background:#fcfcfc;border-left:1px solid #ececec"></div>
<div style="left:1069.300px;top:84px;width:7.600px;height:441.300px;background:#c1c1c1;border-radius:4px"></div>
<!-- footer -->
<div style="left:630px;top:560px;width:450px;height:54px;background:#fff;border-top:1px solid #f1f1f1"></div>
<div style="left:668.700px;top:572.700px;width:80.600px;height:29px;background:#0f6cbd;border-radius:2px"></div>
<span class="t sb" style="left: 690.7px; color: rgb(255, 255, 255); top: 582px; letter-spacing: -0.405px;">Create</span>
<div style="left:763.200px;top:572.700px;width:80.700px;height:29px;background:#fff;border:1px solid #c2c0be;border-radius:2px"></div>
<span class="t sb" style="left: 782.3px; color: rgb(50, 49, 48); top: 582px; letter-spacing: -0.34px;">Discard</span>
</div><!--wrap-->

</body></html>
